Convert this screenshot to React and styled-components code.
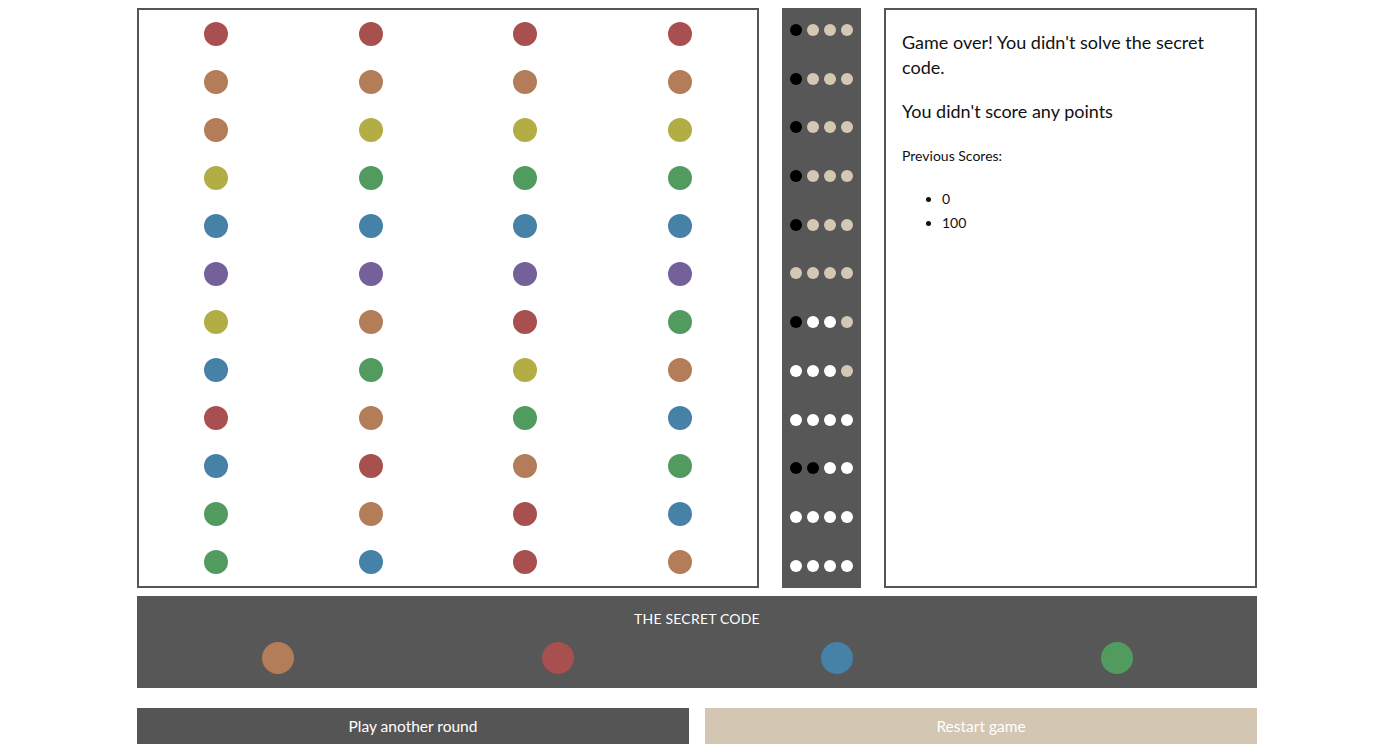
import React from "react";
import styled, { createGlobalStyle } from "styled-components";

const GlobalStyle = createGlobalStyle`
  html, body { margin: 0; padding: 0; background: #fff; }
  body { font-family: Lato, "Open Sans", sans-serif; color: #111; }
  * { box-sizing: border-box; }
`;

const COLORS = {
  r: "#a84f4f",
  b: "#b37d59",
  o: "#b2ad45",
  g: "#529b5e",
  u: "#4681a8",
  p: "#74619a",
};

const FB = {
  k: "#000000",
  e: "#d4c8b4",
  w: "#ffffff",
};

const guesses = [
  "rrrr",
  "bbbb",
  "booo",
  "oggg",
  "uuuu",
  "pppp",
  "obrg",
  "ugob",
  "rbgu",
  "urbg",
  "gbru",
  "gurb",
];

const feedback = [
  "keee",
  "keee",
  "keee",
  "keee",
  "keee",
  "eeee",
  "kwwe",
  "wwwe",
  "wwww",
  "kkww",
  "wwww",
  "wwww",
];

const secret = "brug";

const Page = styled.div`
  width: 1120px;
  margin: 8px 0 0 calc(50% - 561.5px);
`;

const TopRow = styled.div`
  display: flex;
  gap: 23px;
  height: 580px;
`;

const Board = styled.div`
  width: 622px;
  border: 2px solid #555;
  display: flex;
  flex-direction: column;
`;

const GuessRow = styled.div`
  display: grid;
  grid-template-columns: repeat(4, 1fr);
  height: 48px;
  align-items: center;
  justify-items: center;
`;

const Peg = styled.div`
  width: ${(p) => p.$size}px;
  height: ${(p) => p.$size}px;
  border-radius: 50%;
  background: ${(p) => p.$color};
`;

const FeedbackCol = styled.div`
  width: 79px;
  background: #575757;
  padding: 16px 8px 0;
  display: flex;
  flex-direction: column;
`;

const FeedbackRow = styled.div`
  display: flex;
  gap: 5px;
  height: 48.7px;
  flex-shrink: 0;
`;

const Panel = styled.div`
  flex: 1;
  border: 2px solid #555;
  padding: 20px 16px;
`;

const Message = styled.p`
  margin: 0 0 19px;
  font-size: 18px;
  line-height: 25px;
`;

const Small = styled.p`
  margin: 22px 0 0;
  font-size: 14px;
  line-height: 20px;
`;

const ScoreList = styled.ul`
  margin: 21px 0 0;
  padding-left: 40px;
  font-size: 14px;
  line-height: 24px;
`;

const SecretBar = styled.div`
  margin-top: 8px;
  height: 92px;
  background: #575757;
  color: #fff;
  display: flex;
  flex-direction: column;
  align-items: center;
  padding-top: 14px;
`;

const SecretTitle = styled.div`
  font-size: 14px;
  line-height: 18px;
  letter-spacing: 0.2px;
`;

const SecretPegs = styled.div`
  width: 100%;
  display: grid;
  grid-template-columns: repeat(4, 1fr);
  justify-items: center;
  margin-top: 14px;
  padding: 0 0 0 1px;
`;

const Buttons = styled.div`
  margin-top: 20px;
  display: grid;
  grid-template-columns: 1fr 1fr;
  gap: 16px;
`;

const Button = styled.button`
  height: 36px;
  border: none;
  border-radius: 0;
  background: ${(p) => (p.$muted ? "#d3c7b3" : "#555555")};
  color: #fff;
  font-family: Lato, "Open Sans", sans-serif;
  font-size: 15.5px;
  cursor: pointer;
`;

export default function App() {
  return (
    <>
      <GlobalStyle />
      <Page>
        <TopRow>
          <Board>
            {guesses.map((g, i) => (
              <GuessRow key={i}>
                {g.split("").map((c, j) => (
                  <Peg key={j} $size={24} $color={COLORS[c]} />
                ))}
              </GuessRow>
            ))}
          </Board>
          <FeedbackCol>
            {feedback.map((f, i) => (
              <FeedbackRow key={i}>
                {f.split("").map((c, j) => (
                  <Peg key={j} $size={12} $color={FB[c]} />
                ))}
              </FeedbackRow>
            ))}
          </FeedbackCol>
          <Panel>
            <Message>Game over! You didn't solve the secret code.</Message>
            <Message>You didn't score any points</Message>
            <Small>Previous Scores:</Small>
            <ScoreList>
              <li>0</li>
              <li>100</li>
            </ScoreList>
          </Panel>
        </TopRow>
        <SecretBar>
          <SecretTitle>THE SECRET CODE</SecretTitle>
          <SecretPegs>
            {secret.split("").map((c, j) => (
              <Peg key={j} $size={32} $color={COLORS[c]} />
            ))}
          </SecretPegs>
        </SecretBar>
        <Buttons>
          <Button>Play another round</Button>
          <Button $muted>Restart game</Button>
        </Buttons>
      </Page>
    </>
  );
}
